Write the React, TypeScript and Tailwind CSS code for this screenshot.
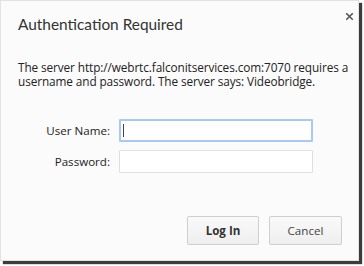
import { X } from "lucide-react";

const App = () => {
  return (
    <div className="w-[364px] h-[266px] bg-white font-['Open_Sans',sans-serif]">
      <div className="w-[359px] h-[261px] bg-[#fbfbfb] border border-[#e2e2e2] shadow-[3px_3px_1px_#3c3c3c] flex flex-col">
        {/* Header */}
        <div className="flex items-start justify-between pl-[17px] pr-[3px] pt-[10px]">
          <h1 className="font-['Lato',sans-serif] text-[15.4px] leading-[24px] pt-[1px] text-[#333]">Authentication Required</h1>
          <X className="w-[11px] h-[11px] text-[#555]" strokeWidth={3.6} />
        </div>

        {/* Message */}
        <p className="mt-[24px] pl-[17px] pr-[6px] text-[11.8px] leading-[14px] text-[#222] tracking-[-0.1px]">
          The server http://webrtc.falconitservices.com:7070 requires a username and password. The server says: Videobridge.
        </p>

        {/* Form */}
        <div className="mt-[31px] grid grid-cols-[109px_194px] gap-x-[9px] gap-y-[8px] items-center">
          <label className="text-right text-[11.6px] text-[#222]">User Name:</label>
          <div className="h-[23px] bg-white border-2 border-[#a6c8fb] rounded-[1px] flex items-center pl-[2px]">
            <span className="w-[1px] h-[13px] bg-[#444]" />
          </div>
          <label className="text-right text-[11.6px] text-[#222]">Password:</label>
          <div className="h-[23px] bg-white border border-[#e0e0e0] rounded-[1px]" />
        </div>

        {/* Buttons */}
        <div className="mt-auto mb-[15px] flex justify-end gap-[10px] pr-[16px]">
          <button className="w-[72px] h-[29px] rounded-[2px] border border-[#cfcfcf] bg-gradient-to-b from-[#fafafa] to-[#eeeeee] text-[11.6px] font-bold text-[#333]">
            Log In
          </button>
          <button className="w-[73px] h-[29px] rounded-[2px] border border-[#cfcfcf] bg-gradient-to-b from-[#fafafa] to-[#eeeeee] text-[11.6px] text-[#444]">
            Cancel
          </button>
        </div>
      </div>
    </div>
  );
};

export default App;
